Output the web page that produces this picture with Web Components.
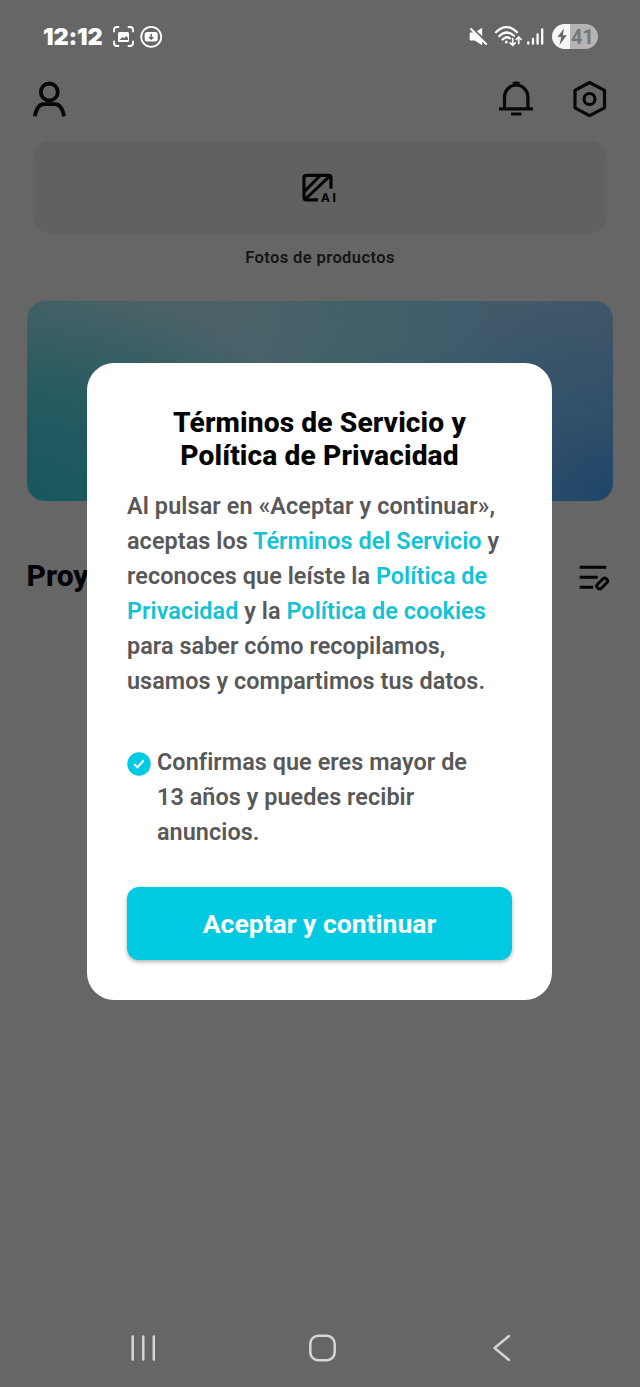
<!DOCTYPE html>
<html lang="es">
<head>
<meta charset="utf-8">
<title>Inicio</title>
<style>
html,body{margin:0;height:100%;background:#666;overflow:hidden}
body{font-family:Roboto,"Liberation Sans",sans-serif}
</style>
</head>
<body>
<app-screen></app-screen>
<script>
const define=(name,html)=>customElements.define(name,class extends HTMLElement{
  constructor(){super();this.attachShadow({mode:'open'}).innerHTML=html;}
});

define('status-bar',`
<style>
:host{display:flex;height:73px;box-sizing:border-box;padding:0 42px 0 43px;align-items:center;color:#fff}
.time{font:900 23.500px/24px Inter,sans-serif;width:70px;letter-spacing:-.2px;white-space:nowrap}
svg{display:block;flex:none}
.gap{flex:1}
.battery{display:flex;width:46px;height:25px;border-radius:13px;background:linear-gradient(90deg,#f6f6f6 18.5px,#b4b4b4 18.5px);align-items:center;color:#777;font:700 20px/25px Roboto,sans-serif}
.battery span{margin-left:-1px;padding-top:1px}
</style>
<span class="time">12:12</span>
<svg width="50" height="24" viewBox="113 25 50 24" fill="none" stroke="#fff" stroke-width="1.8">
 <path d="M114 31.5V30q0-3 3-3h1.500M128.500 27h1.500q3 0 3 3v1.500M133 41.500V43q0 3-3 3h-1.500M118.500 46H117q-3 0-3-3v-1.500" stroke-linecap="round"/>
 <rect x="118" y="32" width="11" height="10" rx="1.500" fill="#fff" stroke="none"/>
 <path d="M119.500 40l3-3 1.500 1.200 2-2.200 2 2v2z" fill="#666" stroke="none"/>
 <circle cx="151.200" cy="36.900" r="10"/>
 <rect x="144.700" y="32" width="13" height="9.500" rx="2.500" fill="#fff" stroke="none"/>
 <path d="M151.200 33.800v5M149 37l2.200 2.200 2.200-2.200" stroke="#555" stroke-width="1.300"/>
</svg>
<span class="gap"></span>
<svg width="83" height="26" viewBox="469 24 83 26" fill="none" stroke="#fff" stroke-width="2.200" stroke-linecap="round">
 <path d="M469.700 33.500q0-1 1-1h4l7.500-4.800v17.600l-7.500-4.800h-4q-1 0-1-1z" fill="#fff" stroke="none"/>
 <path d="M472 27.700L488 43.200" stroke="#666" stroke-width="2.200"/><path d="M471 29L486.100 44" stroke-width="2"/>
 <path d="M496 32.200Q506.500 22 517 32.200M499.200 36.200Q506.500 29 514 35.700M502.500 39.500Q506.500 35.700 510 38.300"/>
 <circle cx="506.300" cy="42" r="1.500" fill="#fff" stroke="none"/>
 <path d="M512.700 38.500v6.500M510.200 42.800l2.500 2.500 2.500-2.500M518.700 43.500v-6M516.200 39.500l2.500-2.500 2.500 2.500" stroke-width="1.700"/>
 <path d="M528.300 43.700v-1.200M533 43.700v-4.800M537.600 43.700v-9.300M542.200 43.700V29.300" stroke-width="2.300"/>
</svg>
<div class="battery"><svg width="20" height="25" viewBox="0 0 20 25"><path d="M12 4.500L5.500 13H9.300L7.500 21L14.800 11.300H10.800Z" fill="#666"/></svg><span>41</span></div>`);

define('top-actions',`
<style>:host{display:flex;justify-content:space-between;height:68px;padding:0 30px;box-sizing:border-box}svg{display:block}</style>
<svg width="40" height="50" viewBox="30 73 40 50" fill="none" stroke="#080808" stroke-width="3.800"><circle cx="49.300" cy="92" r="8.500"/><path d="M34.900 116.300Q37 104.200 44 104.200H55Q61.800 104.200 64 116.300"/></svg>
<svg width="115" height="50" viewBox="495 73 115 50" fill="none" stroke="#080808" stroke-width="3.200">
<path d="M504.500 109V97A11.700 12 0 0 1 527.900 97V109"/><path d="M499 108.800h34M511 114h10.500"/><path d="M513 83.800q3.200-1.500 6.400 0"/>
<path d="M589.500 82.500L604.500 90.300V107.800L589.500 115.700L575 107.800V90.300Z" stroke-linejoin="round"/><circle cx="589.500" cy="99" r="5.500" stroke-width="3.200"/>
</svg>`);

define('product-tool',`
<style>
:host{display:block;padding:0 33px;height:159.500px;box-sizing:border-box;text-align:center}
.card{height:93px;border-radius:18px;background:#5f6163;display:grid;place-items:center}
.label{font:600 16.500px/22px Roboto,sans-serif;letter-spacing:.4px;color:#151515;margin-top:13px}
svg{display:block}
</style>
<div class="card"><svg width="38" height="34" viewBox="301 171 38 34" fill="none" stroke="#050505" stroke-width="3.200">
<path d="M331 188.800V177.500Q331 175.300 328.700 175.300H306.500Q304 175.300 304 177.500V197.500Q304 199.800 306.500 199.800H318"/><path d="M304.500 191.500L320 175.800M305.500 199L330 175.800" stroke-width="3"/>
<text x="321" y="201.800" fill="#050505" font-family="Roboto,sans-serif" font-weight="800" font-size="13" stroke="none" textLength="15" lengthAdjust="spacing">AI</text></svg></div>
<div class="label"><slot></slot></div>`);

define('promo-banner',`
<style>:host{display:block;margin:0 27px;height:200px;border-radius:18px;background:
radial-gradient(ellipse 240px 210px at 100% 100%,#1d456a 0%,#1d456a80 40%,#1d456a00 100%),
radial-gradient(ellipse 300px 220px at 0% 100%,#17575d 0%,#17575dbb 40%,#17575d00 100%),
radial-gradient(ellipse 330px 110px at 16% 5%,#4b6266 0%,#4b626600 100%),
linear-gradient(90deg,#3d6165,#46616a 35%,#3f5f68 55%,#405b6b 75%,#435868)}</style>`);

define('projects-heading',`
<style>:host{display:flex;justify-content:space-between;height:50px;margin-top:51px;padding:0 29px 0 26.500px;align-items:center}span{font:800 30px/36px Roboto,sans-serif;color:#050509;margin-top:-2px}svg{display:block}</style>
<span><slot></slot></span>
<svg width="34" height="34" viewBox="577 560 34 34" fill="none" stroke="#050505" stroke-width="3"><path d="M579.700 567.300h26.500M579.700 577.200h18M579.700 587.200h13.500"/><rect x="-6.200" y="-2.700" width="12.400" height="5.400" rx="2" transform="translate(602.200 583.500) rotate(-45)" stroke-width="2.900"/></svg>`);

define('system-nav',`
<style>:host{display:flex;height:78px;padding:0 128px 0 130px;justify-content:space-between;align-items:center;box-sizing:border-box}svg{display:block}</style>
<svg width="26" height="30" viewBox="0 0 26 30" stroke="#d6d6d6" stroke-width="2.500" stroke-linecap="round"><path d="M2.700 3.500v23M13.300 3.500v23M23.800 3.500v23"/></svg>
<svg width="30" height="30" viewBox="2.300 0 30 30" fill="none" stroke="#d6d6d6" stroke-width="2.500"><rect x="3.600" y="2.800" width="24.400" height="24.400" rx="8" /></svg>
<svg width="20" height="30" viewBox="0 0 20 30" fill="none" stroke="#d6d6d6" stroke-width="2.300" stroke-linecap="round" stroke-linejoin="round"><path d="M17 3L2.500 15L17 27"/></svg>`);

define('accept-button',`
<style>:host{display:block}button{display:block;width:100%;height:73.500px;border:0;padding:1px 0 0;border-radius:12px;background:#00cae2;color:#fff;font:700 26.500px/72px Roboto,sans-serif;box-shadow:0 2px 4px #0000004d}</style>
<button><slot></slot></button>`);

define('age-check',`
<style>:host{display:flex;gap:6px;color:#585858}svg{display:block;flex:none;margin-top:6.500px}div{white-space:nowrap}</style>
<svg width="24" height="24" viewBox="0 0 24 24"><circle cx="12" cy="12" r="11.700" fill="#00cae2"/><path d="M7.200 12.200L10.400 15.300L16.700 8.500" fill="none" stroke="#fff" stroke-width="2"/></svg>
<div><slot></slot></div>`);

define('terms-dialog',`
<style>
:host{display:block;box-sizing:border-box;width:465px;height:637.500px;padding:43px 40px 40px;border-radius:27px;background:#fff;font:600 23.400px/35px Roboto,sans-serif;letter-spacing:.06px;color:#585858}
h2{margin:0;font:800 28.200px/33.500px Roboto,sans-serif;letter-spacing:.1px;color:#050505;text-align:center;white-space:nowrap}
p{margin:16px 0 46.500px;white-space:nowrap}
p::first-line{letter-spacing:.12px}
b{font-weight:600;color:#14c2d5}
accept-button{margin-top:36.500px;letter-spacing:0}
</style>
<h2>Términos de Servicio y<br>Política de Privacidad</h2>
<p>Al pulsar en «Aceptar y continuar»,<br>aceptas los <b>Términos del Servicio</b> y<br>reconoces que leíste la <b>Política de<br>Privacidad</b> y la <b>Política de cookies</b><br>para saber cómo recopilamos,<br>usamos y compartimos tus datos.</p>
<age-check>Confirmas que eres mayor de<br>13 años y puedes recibir<br>anuncios.</age-check>
<accept-button>Aceptar y continuar</accept-button>`);

define('app-screen',`
<style>
:host{display:flex;flex-direction:column;width:640px;height:1387px;position:relative;background:#666}
system-nav{margin-top:auto}
terms-dialog{position:absolute;left:87px;top:362.500px}
</style>
<status-bar></status-bar><top-actions></top-actions>
<product-tool>Fotos de productos</product-tool>
<promo-banner></promo-banner>
<projects-heading>Proy</projects-heading>
<system-nav></system-nav>
<terms-dialog></terms-dialog>`);
</script>
</body>
</html>
